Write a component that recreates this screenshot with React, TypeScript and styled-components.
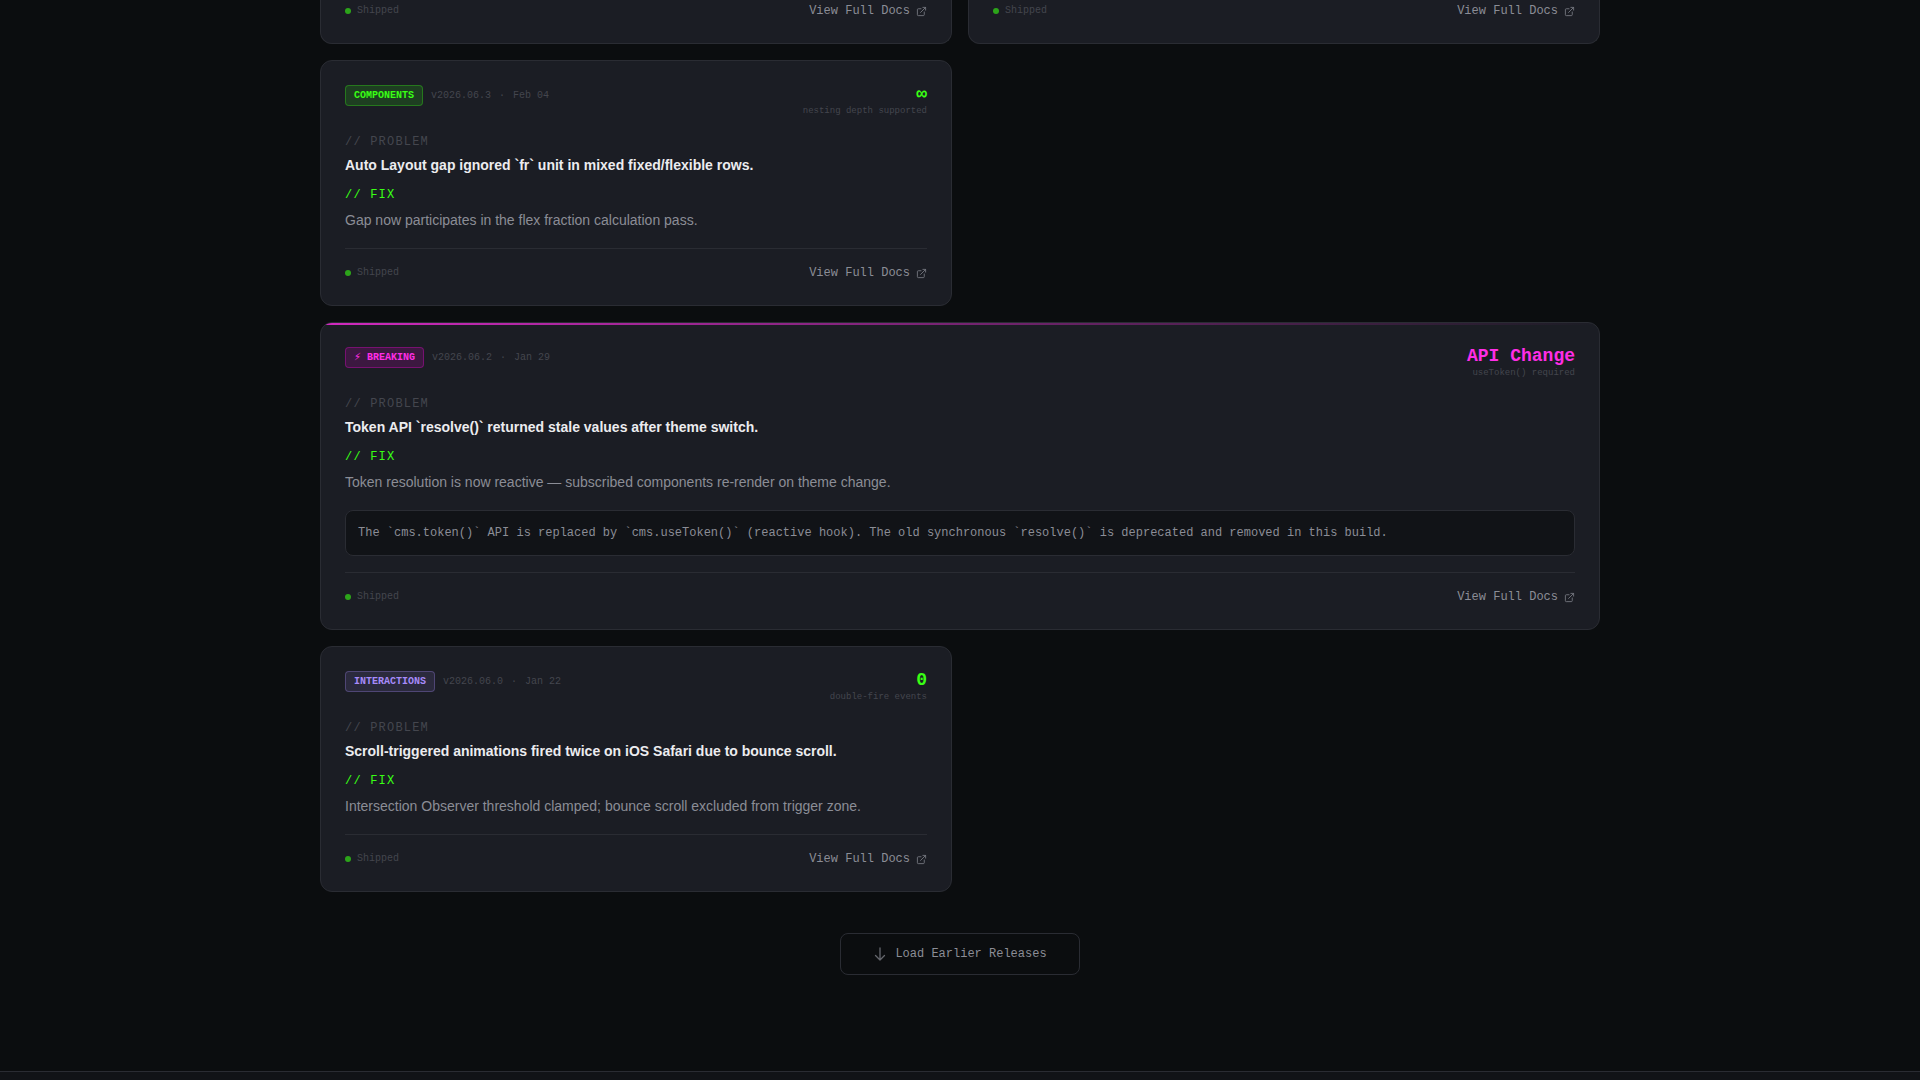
import React from "react";
import styled, { createGlobalStyle, css } from "styled-components";
import { ExternalLink } from "lucide-react";

const mono = `"Liberation Mono", "DejaVu Sans", monospace`;
const sans = `"Liberation Sans", Arial, sans-serif`;

const GlobalStyle = createGlobalStyle`
  *, *::before, *::after { box-sizing: border-box; }
  body {
    margin: 0;
    background: #0b0d0f;
    color: #ececef;
    font-family: ${sans};
  }
  h3, p { margin: 0; }
`;

const tones = {
  green: { text: "#39ff14", fill: "rgba(57, 255, 20, 0.15)", line: "rgba(57, 255, 20, 0.3)" },
  pink: { text: "#ff2de6", fill: "rgba(255, 0, 229, 0.15)", line: "rgba(255, 0, 229, 0.3)" },
  violet: { text: "#a78bfa", fill: "rgba(167, 139, 250, 0.12)", line: "rgba(167, 139, 250, 0.3)" },
};
type Tone = keyof typeof tones;

const Page = styled.div`
  height: 100vh;
  overflow: hidden;
  display: flex;
  flex-direction: column;
`;

const Main = styled.main`
  flex: none;
  width: 100%;
  max-width: 1280px;
  margin: 0 auto;
  padding-bottom: 96px;
  display: flex;
  flex-direction: column;
  align-items: center;
  gap: 41px;
`;

const Grid = styled.div`
  width: 100%;
  display: grid;
  grid-template-columns: repeat(2, minmax(0, 1fr));
  gap: 16px;
`;

const Card = styled.article<{ $wide?: boolean; $cut?: boolean }>`
  position: relative;
  overflow: hidden;
  grid-column: ${(p) => (p.$cut ? "auto" : p.$wide ? "1 / -1" : "1")};
  padding: 24px;
  background: #1b1d24;
  border: 1px solid #2a2c33;
  border-radius: 12px;
  ${(p) =>
    p.$cut &&
    css`
      padding-top: 3px;
      border-top: 0;
      border-radius: 0 0 12px 12px;
    `}
`;

const Stripe = styled.span`
  position: absolute;
  top: 0;
  left: 0;
  right: 0;
  height: 2px;
  background: linear-gradient(90deg, #ff2de6, transparent);
  opacity: 0.8;
`;

const Header = styled.header`
  height: 33px;
  margin-bottom: 16px;
  display: flex;
  justify-content: space-between;
  align-items: flex-start;
`;

const Meta = styled.div`
  display: flex;
  align-items: center;
  gap: 8px;
  font: 10px/15px ${mono};
  color: #44464e;
`;

const Badge = styled.span<{ $tone: Tone }>`
  height: 21px;
  padding: 2px 8px;
  border: 1px solid ${(p) => tones[p.$tone].line};
  border-radius: 4px;
  background: ${(p) => tones[p.$tone].fill};
  color: ${(p) => tones[p.$tone].text};
  font-weight: 700;
`;

const Metric = styled.div`
  text-align: right;
  font-family: ${mono};
`;

const MetricValue = styled.div<{ $tone: Tone }>`
  font-size: 18px;
  line-height: 18px;
  font-weight: 700;
  color: ${(p) => tones[p.$tone].text};
`;

const MetricLabel = styled.div`
  font-size: 9px;
  line-height: 16px;
  color: #44464e;
`;

const Label = styled.p<{ $fix?: boolean }>`
  font: 12px/16px ${mono};
  letter-spacing: 0.1em;
  color: ${(p) => (p.$fix ? "#39ff14" : "#44464e")};
`;

const Problem = styled.h3`
  margin: 5px 0 12px;
  font-size: 14px;
  line-height: 20px;
  font-weight: 700;
  color: #ececef;
`;

const Fix = styled.p`
  margin: 6px 0 16px;
  font-size: 14px;
  line-height: 23px;
  color: #8b8d96;
`;

const Note = styled.p`
  margin-bottom: 16px;
  padding: 12px;
  border: 1px solid #2a2c33;
  border-radius: 8px;
  background: #111317;
  font: 12px/20px ${mono};
  color: #8b8d96;
`;

const Footer = styled.footer<{ $plain?: boolean }>`
  display: flex;
  justify-content: space-between;
  align-items: center;
  ${(p) =>
    !p.$plain &&
    css`
      padding-top: 16px;
      border-top: 1px solid #2a2c33;
    `}
`;

const Status = styled.span`
  display: flex;
  align-items: center;
  gap: 6px;
  font: 10px/16px ${mono};
  color: #44464e;

  &::before {
    content: "";
    width: 6px;
    height: 6px;
    border-radius: 50%;
    background: #39ff14;
    opacity: 0.6;
  }
`;

const DocsLink = styled.a`
  display: flex;
  align-items: center;
  gap: 6px;
  font: 12px/16px ${mono};
  color: #8b8d96;
  text-decoration: none;

  svg {
    opacity: 0.8;
  }
`;

const LoadMore = styled.button`
  height: 42px;
  padding: 0 32px;
  display: flex;
  align-items: center;
  gap: 8px;
  border: 1px solid #2a2c33;
  border-radius: 8px;
  background: transparent;
  font: 12px/18px ${mono};
  color: #8b8d96;

  svg {
    opacity: 0.7;
  }
`;

const SiteFooter = styled.footer`
  flex: 1;
  border-top: 1px solid #2a2c33;
  background: #111317;
`;

interface Release {
  tone: Tone;
  badge: string;
  version: string;
  date: string;
  metric: string;
  metricTone: Tone;
  metricLabel: string;
  problem: string;
  fix: string;
  note?: string;
}

const releases: Release[] = [
  {
    tone: "green",
    badge: "COMPONENTS",
    version: "v2026.06.3",
    date: "Feb 04",
    metric: "∞",
    metricTone: "green",
    metricLabel: "nesting depth supported",
    problem: "Auto Layout gap ignored `fr` unit in mixed fixed/flexible rows.",
    fix: "Gap now participates in the flex fraction calculation pass.",
  },
  {
    tone: "pink",
    badge: "⚡ BREAKING",
    version: "v2026.06.2",
    date: "Jan 29",
    metric: "API Change",
    metricTone: "pink",
    metricLabel: "useToken() required",
    problem: "Token API `resolve()` returned stale values after theme switch.",
    fix: "Token resolution is now reactive — subscribed components re-render on theme change.",
    note: "The `cms.token()` API is replaced by `cms.useToken()` (reactive hook). The old synchronous `resolve()` is deprecated and removed in this build.",
  },
  {
    tone: "violet",
    badge: "INTERACTIONS",
    version: "v2026.06.0",
    date: "Jan 22",
    metric: "0",
    metricTone: "green",
    metricLabel: "double-fire events",
    problem: "Scroll-triggered animations fired twice on iOS Safari due to bounce scroll.",
    fix: "Intersection Observer threshold clamped; bounce scroll excluded from trigger zone.",
  },
];

function DownArrow() {
  return (
    <svg
      width="14"
      height="14"
      viewBox="0 0 14 14"
      fill="none"
      stroke="currentColor"
      strokeWidth="1.3"
      strokeLinecap="round"
      strokeLinejoin="round"
      aria-hidden
    >
      <path d="M7 1v12M2.5 8.5 7 13l4.500-4.500" />
    </svg>
  );
}

function CardFooter({ plain }: { plain?: boolean }) {
  return (
    <Footer $plain={plain}>
      <Status>Shipped</Status>
      <DocsLink href="#docs">
        View Full Docs
        <ExternalLink size={11} aria-hidden />
      </DocsLink>
    </Footer>
  );
}

function ReleaseCard({ release: r }: { release: Release }) {
  return (
    <Card $wide={Boolean(r.note)}>
      {r.note && <Stripe />}
      <Header>
        <Meta>
          <Badge $tone={r.tone}>{r.badge}</Badge>
          <span>{r.version}</span>
          <span>·</span>
          <span>{r.date}</span>
        </Meta>
        <Metric>
          <MetricValue $tone={r.metricTone}>{r.metric}</MetricValue>
          <MetricLabel>{r.metricLabel}</MetricLabel>
        </Metric>
      </Header>
      <Label>// PROBLEM</Label>
      <Problem>{r.problem}</Problem>
      <Label $fix>// FIX</Label>
      <Fix>{r.fix}</Fix>
      {r.note && <Note>{r.note}</Note>}
      <CardFooter />
    </Card>
  );
}

export default function App() {
  return (
    <Page>
      <GlobalStyle />
      <Main>
        <Grid>
          <Card $cut>
            <CardFooter plain />
          </Card>
          <Card $cut>
            <CardFooter plain />
          </Card>
          {releases.map((r) => (
            <ReleaseCard key={r.version} release={r} />
          ))}
        </Grid>
        <LoadMore type="button">
          <DownArrow />
          Load Earlier Releases
        </LoadMore>
      </Main>
      <SiteFooter />
    </Page>
  );
}
